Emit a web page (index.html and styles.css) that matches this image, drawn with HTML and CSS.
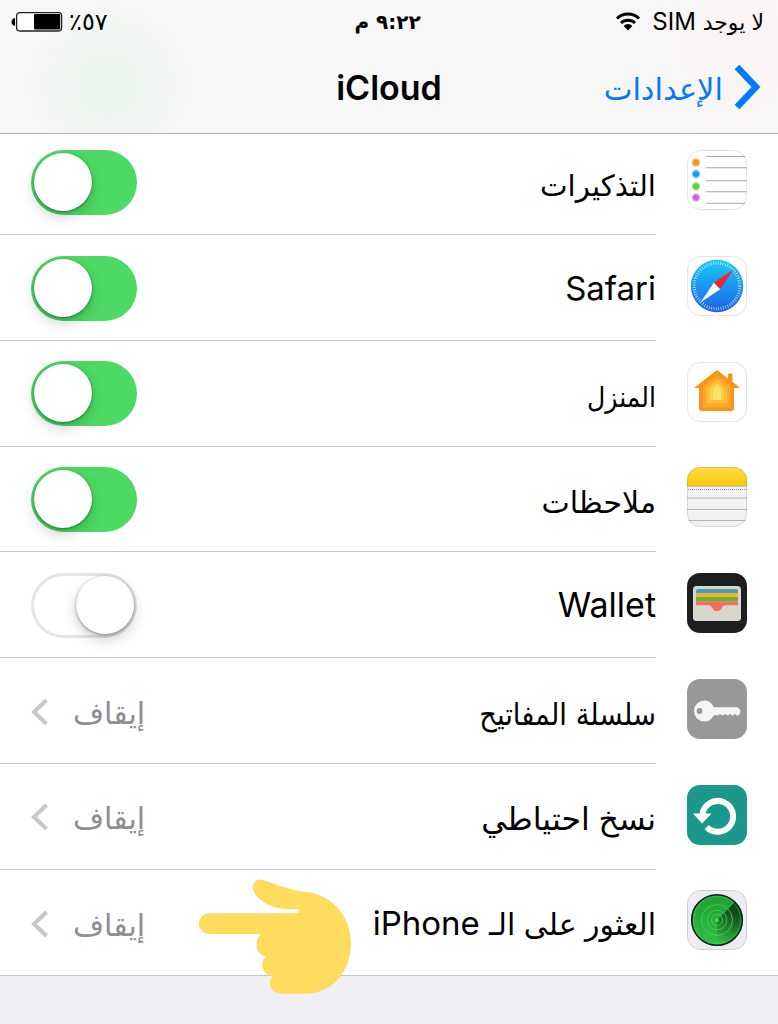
FILE: index.html
```html
<!DOCTYPE html>
<html lang="ar" dir="rtl">

    <head>
        <meta charset="UTF-8">
        <meta name="viewport" content="width=device-width, initial-scale=1.0">
        <title>iCloud</title>
        <link rel="stylesheet" href="styles.css">
    </head>

    <body>
        <header class="header">
            <div class="status-bar">
                <div class="carrier">
                    <span class="carrier-name"><span class="ar">لا يوجد</span> SIM</span>
                    <svg class="wifi" viewBox="0 0 26 20" width="26" height="20">
                        <path d="M2 7.500a15.500 15.500 0 0 1 22 0M6 12a10 10 0 0 1 14 0" fill="none" stroke="#000" stroke-width="3" />
                        <path d="M13 19.500l-4.400-4.600a6.300 6.300 0 0 1 8.800 0z" fill="#000" />
                    </svg>
                </div>
                <div class="time">٩:٢٢ م</div>
                <div class="battery">
                    <span class="percent">٥٧٪</span>
                    <svg viewBox="0 0 52 22" width="52" height="22">
                        <rect x="5.600" y="1.600" width="45" height="18.400" rx="3.200" fill="#fff" stroke="#222" stroke-width="1.300" />
                        <rect x="23" y="3" width="26.200" height="15.600" rx="1" fill="#000" />
                        <path d="M4 7v8C-.6 14.500-.6 7.500 4 7z" fill="#000" />
                    </svg>
                </div>
            </div>
            <div class="nav-bar">
                <a class="back">
                    <svg viewBox="0 0 28 44" width="28" height="44">
                        <path d="M3 2l19 20L3 42" fill="none" stroke="#007aff" stroke-width="6.500" />
                    </svg>
                    <span>الإعدادات</span>
                </a>
                <h1 class="title">iCloud</h1>
            </div>
        </header>

        <main class="list">
            <div class="row">
                <svg class="icon" viewBox="0 0 60 60">
                    <rect x=".5" y=".5" width="59" height="59" rx="13" fill="#fff" stroke="#e4e4e6" />
                    <path d="M19 6.500h39M19 17.800h40.500M19 30.800h40.500M19 41.800h40.500M19 53.200h39" stroke="#a8a8a8" stroke-width="1.100" />
                    <g stroke-width="1.300">
                        <circle cx="9" cy="12.500" r="3.500" fill="#f7931a" stroke="#f9b767" />
                        <circle cx="9" cy="24" r="3.500" fill="#1d9cf0" stroke="#72c3f7" />
                        <circle cx="9" cy="36.300" r="3.500" fill="#5bd03c" stroke="#9be383" />
                        <circle cx="9" cy="47.600" r="3.500" fill="#c469d8" stroke="#dda3e9" />
                    </g>
                </svg>
                <div class="row-body">
                    <span class="label reminders"><span class="ar">التذكيرات</span></span>
                    <span class="switch on"></span>
                </div>
            </div>

            <div class="row">
                <svg class="icon" viewBox="0 0 60 60">
                    <defs>
                        <linearGradient id="sky" x1="0" y1="0" x2="0" y2="1">
                            <stop offset="0" stop-color="#1bc9fb" />
                            <stop offset="1" stop-color="#1d62e6" />
                        </linearGradient>
                    </defs>
                    <rect x=".5" y=".5" width="59" height="59" rx="13" fill="#fff" stroke="#e4e4e6" />
                    <circle cx="30" cy="30" r="26.200" fill="url(#sky)" />
                    <circle cx="30" cy="30" r="22.800" fill="none" stroke="#fff" stroke-opacity=".7" stroke-width="3" stroke-dasharray=".8 1.590" />
                    <path d="M46.500 13.500L33.200 33.200l-6.400-6.400z" fill="#f0262b" />
                    <path d="M13.500 46.500l13.300-19.700 6.400 6.400z" fill="#fff" />
                </svg>
                <div class="row-body">
                    <span class="label safari">Safari</span>
                    <span class="switch on"></span>
                </div>
            </div>

            <div class="row">
                <svg class="icon" viewBox="0 0 60 60">
                    <rect x=".5" y=".5" width="59" height="59" rx="13" fill="#fff" stroke="#e4e4e6" />
                    <path d="M30 8l11 8.500V12.500q0-1 1-1h2.500q1 0 1 1V20L53 26h-6v20q0 3-3 3H15q-3 0-3-3V26H7z" fill="#f9931e" />
                    <path d="M30 12.500L44 24v20q0 1.500-1.500 1.500h-25Q16 45.500 16 44V24z" fill="#fca728" />
                    <path d="M30 17l10.500 9v15.500h-21V26z" fill="#fdbd38" />
                    <path d="M30 21l7 6v11H23V27z" fill="#fed24e" />
                    <path d="M30 24l4 3.500V38h-8V27.500z" fill="#ffe16a" />
                </svg>
                <div class="row-body">
                    <span class="label home"><span class="ar">المنزل</span></span>
                    <span class="switch on"></span>
                </div>
            </div>

            <div class="row">
                <svg class="icon" viewBox="0 0 60 60">
                    <defs>
                        <linearGradient id="note" x1="0" y1="0" x2="0" y2="1">
                            <stop offset="0" stop-color="#fddb4a" />
                            <stop offset="1" stop-color="#fdca05" />
                        </linearGradient>
                        <clipPath id="tile"><rect width="60" height="60" rx="13" /></clipPath>
                    </defs>
                    <g clip-path="url(#tile)">
                        <rect width="60" height="60" fill="#f1f1f1" />
                        <rect width="60" height="19" fill="url(#note)" />
                        <path d="M0 19.200h60M0 31h60M0 42.500h60M0 53.500h60" stroke="#b4b4b4" />
                        <path d="M1 22.500h59" stroke="#999" stroke-dasharray="1 1" />
                    </g>
                    <rect x=".5" y=".5" width="59" height="59" rx="13" fill="none" stroke="#000" stroke-opacity=".1" />
                </svg>
                <div class="row-body">
                    <span class="label notes"><span class="ar">ملاحظات</span></span>
                    <span class="switch on"></span>
                </div>
            </div>

            <div class="row">
                <svg class="icon" viewBox="0 0 60 60">
                    <rect width="60" height="60" rx="13" fill="#1e1e20" />
                    <rect x="6" y="13" width="48" height="35" rx="3.500" fill="#d9d6cc" />
                    <path d="M9 20v-2q0-2 2-2h38q2 0 2 2v2z" fill="#4a9cbe" />
                    <path d="M9 20h42v4H9z" fill="#f3b32a" />
                    <path d="M9 24h42v4.300H9z" fill="#6ab134" />
                    <path d="M9 28.300h42v4H39c-2.500 0-3.500 1-4.500 3-2 4-7 4-9 0-1-2-2-3-4.500-3H9z" fill="#f0705f" />
                </svg>
                <div class="row-body">
                    <span class="label wallet">Wallet</span>
                    <span class="switch"></span>
                </div>
            </div>

            <div class="row">
                <svg class="icon" viewBox="0 0 60 60">
                    <rect width="60" height="60" rx="13" fill="#989898" />
                    <path d="M17.500 21.500c4 0 7 2 8.700 5.500.4.900 1 1.200 2 1.200H50q3.500 1.500 3.500 4.500l-1.500 3.500h-2.500l-1.500-1.500-1.500 1.500h-2l-1.500-1.500-1.500 1.500h-2L38 34.700l-1.500 1.500h-2L33 34.700l-1.500 1.500H28c-1 0-1.600.3-2 1.200-1.700 3.300-4.600 5.200-8.500 5.200a10.500 10.500 0 0 1 0-21.100z" fill="#f5f5f5" />
                    <circle cx="12.500" cy="32" r="2.900" fill="#989898" />
                </svg>
                <div class="row-body">
                    <span class="label keychain"><span class="ar">سلسلة المفاتيح</span></span>
                    <span class="value">إيقاف</span>
                    <svg class="chevron" viewBox="0 0 18 28"><path d="M15.500 2L3 14l12.500 12" /></svg>
                </div>
            </div>

            <div class="row">
                <svg class="icon" viewBox="0 0 60 60">
                    <rect width="60" height="60" rx="13" fill="#1b988b" />
                    <path d="M15.500 29a15.400 15.400 0 1 1 4.200 13.100" fill="none" stroke="#fff" stroke-width="6" />
                    <path d="M6 28.500h18.500L15 38.500z" fill="#fff" />
                </svg>
                <div class="row-body">
                    <span class="label backup"><span class="ar">نسخ احتياطي</span></span>
                    <span class="value">إيقاف</span>
                    <svg class="chevron" viewBox="0 0 18 28"><path d="M15.500 2L3 14l12.500 12" /></svg>
                </div>
            </div>

            <div class="row">
                <svg class="icon" viewBox="0 0 60 60">
                    <defs>
                        <linearGradient id="radar" x1="0" y1="0" x2="0" y2="1">
                            <stop offset="0" stop-color="#1f9f36" />
                            <stop offset="1" stop-color="#35bd45" />
                        </linearGradient>
                        <linearGradient id="sweep" x1=".6" y1="0" x2=".3" y2="1">
                            <stop offset="0" stop-color="#092b12" stop-opacity=".9" />
                            <stop offset="1" stop-color="#092b12" stop-opacity="0" />
                        </linearGradient>
                    </defs>
                    <rect x=".5" y=".5" width="59" height="59" rx="13" fill="#ececf2" stroke="#cfcfd4" />
                    <circle cx="30" cy="30" r="25.300" fill="url(#radar)" stroke="#10251a" stroke-width="1.600" />
                    <path d="M30 30l17.300-17.300A24.500 24.500 0 0 1 30 54.500z" fill="url(#sweep)" />
                    <g fill="none" stroke="#45d84e" stroke-opacity=".75">
                        <circle cx="30" cy="30" r="5.500" />
                        <circle cx="30" cy="30" r="9.800" />
                        <circle cx="30" cy="30" r="15.500" />
                        <circle cx="30" cy="30" r="23.500" stroke-opacity=".45" />
                    </g>
                    <circle cx="30" cy="30" r="2" fill="#3fd84e" />
                </svg>
                <div class="row-body">
                    <span class="label iphone"><span class="ar">العثور على الـ</span> iPhone</span>
                    <span class="value">إيقاف</span>
                    <svg class="chevron" viewBox="0 0 18 28"><path d="M15.500 2L3 14l12.500 12" /></svg>
                </div>
                <svg class="hand" viewBox="0 0 154 116" width="154" height="116">
                    <path d="M11.300 34.300H97C99 34.300 101.300 33.500 101.300 31.700C101.300 30 99.500 30.300 97 30.300H91C79 30.300 69 26.500 61 19.500C57 16 55 12 55 8.500C55 2 60 -.8 66 1.200C80 6 93 11.500 106 12.700C133 14 153 37 153 64C153 93 134 114.700 107 114.700H84C77 114.700 72 110 72 104C72 101 73 98.500 75 97C69 96.500 64.300 92 64.300 86C64.300 82 65.500 79.500 68 77.700C62 76 58.500 71.500 58.500 66C58.500 61.500 60 57.500 63 55H11.300A10.350 10.350 0 0 1 11.300 34.300Z" fill="#ffdc5d" />
                </svg>
            </div>
        </main>
    </body>

</html>
```
FILE: styles.css
```css
* {
    margin: 0;
    padding: 0;
    box-sizing: border-box;
}

body {
    height: 1024px;
    overflow: hidden;
    background-color: #efeff4;
    font-family: Inter, "DejaVu Sans", sans-serif;
    color: #000;
}

svg {
    display: block;
    flex-shrink: 0;
}

/* header */
.header {
    position: relative;
    z-index: 1;
    height: 134px;
    background: radial-gradient(circle at 108px 85px, #e9f5eb 0, rgba(233, 245, 235, 0) 90px),
        radial-gradient(circle at 740px 50px, #faf4f4 0, rgba(250, 244, 244, 0) 130px), #f7f7f7;
    border-bottom: 1px solid #b2b2b2;
}

.status-bar,
.nav-bar {
    display: grid;
    grid-template-columns: 1fr auto 1fr;
    align-items: center;
}

.status-bar {
    height: 43px;
    padding: 0 14px 0 11px;
    font-size: 24px;
}

.carrier,
.battery {
    display: flex;
    align-items: center;
}

.carrier {
    gap: 11px;
}

.wifi {
    margin-bottom: 2px;
}

.battery {
    justify-content: flex-end;
    gap: 6px;
}

.carrier .ar {
    font-size: 22px;
    line-height: 0;
}

.time {
    font-family: "DejaVu Sans", sans-serif;
    font-size: 20px;
    font-weight: bold;
}

.percent {
    font-family: "DejaVu Sans", sans-serif;
    font-size: 24px;
}

.nav-bar {
    height: 88px;
    padding: 0 16px;
}

.back {
    display: flex;
    align-items: center;
    gap: 11px;
    color: #007aff;
    font-family: "DejaVu Sans", sans-serif;
    font-size: 30.500px;
}

.back span {
    padding-top: 4px;
}

.title {
    font-size: 34px;
    font-weight: 600;
}

/* list */
.list {
    margin-top: -4.600px;
    background-color: #fff;
    border-bottom: 1px solid #c8c7cc;
}

.row {
    position: relative;
    display: flex;
    height: 105.750px;
    padding-right: 31px;
}

.icon {
    width: 60px;
    height: 60px;
    margin: 20.600px 0 0 31px;
}

.row-body {
    flex: 1;
    display: flex;
    align-items: center;
    padding-left: 31px;
    padding-top: 1px;
    border-bottom: 1px solid #c8c7cc;
}

.row:last-child .row-body {
    border-bottom: none;
}

.label {
    margin-left: auto;
    font-size: 34px;
    line-height: 44px;
    white-space: nowrap;
}

.label .ar {
    font-size: 30px;
    line-height: 0;
}

.safari,
.iphone {
    font-size: 33px;
}

.reminders,
.home,
.notes,
.keychain,
.backup {
    padding-top: 3px;
}

.reminders .ar {
    font-size: 29.300px;
}

.home .ar,
.keychain .ar {
    font-family: "DejaVu Sans Condensed", "DejaVu Sans", sans-serif;
    font-stretch: condensed;
}

.home .ar {
    font-size: 28px;
}

.keychain .ar {
    font-size: 30.500px;
}

.backup .ar {
    font-size: 31.600px;
}

.value {
    margin-left: 24px;
    padding-top: 4px;
    color: #8e8e93;
    font-family: "DejaVu Sans", sans-serif;
    font-size: 30px;
}

.chevron {
    width: 18px;
    height: 28px;
    margin-top: 1px;
    fill: none;
    stroke: #c7c7cc;
    stroke-width: 4;
}

.switch {
    display: flex;
    width: 106px;
    height: 65px;
    padding: 3px;
    border-radius: 33px;
    box-shadow: inset 0 0 0 3px #e5e5e5;
}

.switch::before {
    content: "";
    width: 58px;
    height: 58px;
    border-radius: 50%;
    background-color: #fff;
    box-shadow: 0 1px 3px rgba(0, 0, 0, 0.4), 0 6px 14px rgba(0, 0, 0, 0.18);
}

.switch.on {
    justify-content: flex-end;
    background-color: #4cd964;
    box-shadow: none;
}

.hand {
    position: absolute;
    left: 198px;
    top: 9.200px;
}
```
